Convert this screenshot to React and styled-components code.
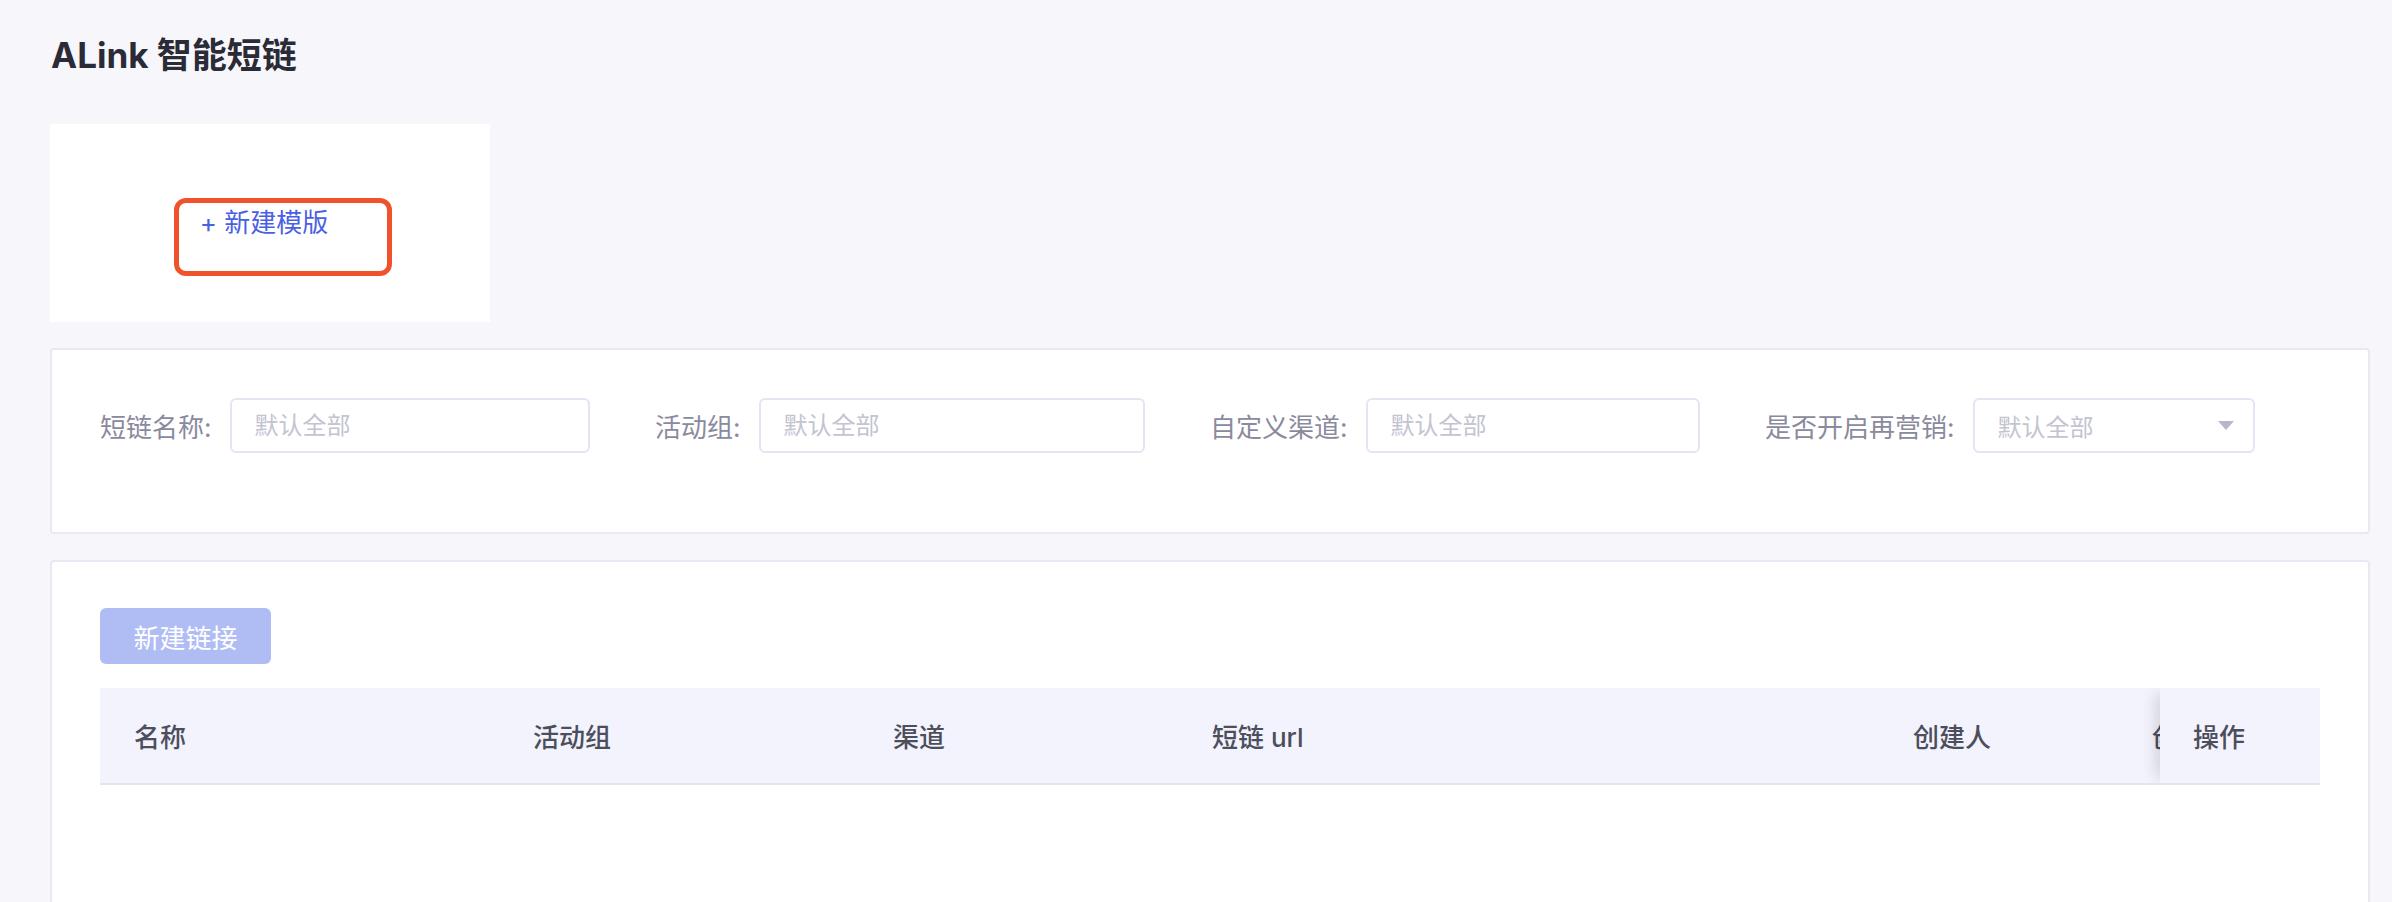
import styled, { createGlobalStyle } from "styled-components"

const GlobalStyle = createGlobalStyle`
  html, body {
    margin: 0;
    padding: 0;
    background: #f7f7fb;
  }
  body {
    font-family: Inter, "Noto Sans CJK SC", sans-serif;
  }
  *, *::before, *::after {
    box-sizing: border-box;
  }
`

const filters = [
  { label: "短链名称:", select: false },
  { label: "活动组:", select: false },
  { label: "自定义渠道:", select: false },
  { label: "是否开启再营销:", select: true },
]

const columns = [
  { title: "名称", width: 399 },
  { title: "活动组", width: 360 },
  { title: "渠道", width: 319 },
  { title: "短链 url", width: 701 },
  { title: "创建人", width: 239 },
  { title: "创建时间", width: 42 },
]

export default function App() {
  return (
    <Page>
      <GlobalStyle />
      <Title>ALink 智能短链</Title>

      <TemplateCard>
        <NewTemplate>+ 新建模版</NewTemplate>
      </TemplateCard>

      <FilterCard>
        <FilterRow>
          {filters.map((f) => (
            <Field key={f.label}>
              <Label>{f.label}</Label>
              {f.select ? (
                <Select>
                  <span>默认全部</span>
                  <Arrow />
                </Select>
              ) : (
                <Input placeholder="默认全部" />
              )}
            </Field>
          ))}
        </FilterRow>
      </FilterCard>

      <TableCard>
        <PrimaryButton>新建链接</PrimaryButton>
        <HeaderRow>
          {columns.map((c) => (
            <HeadCell key={c.title} $width={c.width}>
              {c.title}
            </HeadCell>
          ))}
          <FixedCell>操作</FixedCell>
        </HeaderRow>
      </TableCard>
    </Page>
  )
}

const Page = styled.div`
  padding: 34px 22px 0 50px;
  min-height: 902px;
  overflow: hidden;
`

const Title = styled.h1`
  margin: 0 0 0 1px;
  font-size: 35px;
  line-height: 42px;
  font-weight: 700;
  color: #2b2b38;
`

const TemplateCard = styled.div`
  margin-top: 48px;
  width: 440px;
  height: 198px;
  background: #fff;
  display: flex;
  align-items: center;
  justify-content: center;
  padding-right: 12px;
`

const NewTemplate = styled.div`
  position: relative;
  font-size: 26px;
  line-height: 36px;
  color: #4a60e4;
  cursor: pointer;

  &::after {
    content: "";
    position: absolute;
    top: -7px;
    left: -26px;
    width: 218px;
    height: 78px;
    border: 5px solid #f0532b;
    border-radius: 12px;
  }
`

const FilterCard = styled.div`
  margin-top: 26px;
  background: #fff;
  border: 2px solid #e8e9f3;
  border-radius: 4px;
  padding: 48px 48px 79px;
`

const FilterRow = styled.div`
  display: flex;
  gap: 65px;
`

const Field = styled.div`
  width: 490px;
  display: flex;
  align-items: center;
  gap: 18px;
`

const Label = styled.span`
  font-size: 26px;
  color: #8a8a9e;
  white-space: nowrap;
`

const Input = styled.input`
  flex: 1;
  min-width: 0;
  height: 55px;
  border: 2px solid #e4e5f3;
  border-radius: 6px;
  padding: 0 23px;
  font-family: inherit;
  font-size: 24px;
  color: #333;
  outline: none;
  background: #fff;

  &::placeholder {
    color: #c3c3d1;
  }
`

const Select = styled.div`
  flex: 1;
  height: 55px;
  border: 2px solid #e4e5f3;
  border-radius: 6px;
  padding: 0 19px 0 23px;
  display: flex;
  align-items: center;
  justify-content: space-between;
  font-size: 24px;
  color: #c3c3d1;
`

const Arrow = styled.span`
  width: 0;
  height: 0;
  border-left: 8px solid transparent;
  border-right: 8px solid transparent;
  border-top: 9px solid #b6b7c9;
`

const TableCard = styled.div`
  margin-top: 26px;
  min-height: 500px;
  background: #fff;
  border: 2px solid #e8e9f3;
  border-radius: 4px;
  padding: 46px 48px;
`

const PrimaryButton = styled.button`
  width: 171px;
  height: 56px;
  border: none;
  border-radius: 6px;
  background: #b0bdf4;
  color: #fff;
  font-family: inherit;
  font-size: 26px;
  cursor: not-allowed;
`

const HeaderRow = styled.div`
  position: relative;
  margin-top: 24px;
  height: 97px;
  display: flex;
  background: #f2f3fc;
  border-bottom: 2px solid #e3e4ee;
  overflow: hidden;
`

const HeadCell = styled.div`
  flex: 0 0 ${(p) => p.$width}px;
  display: flex;
  align-items: center;
  padding-left: 34px;
  font-size: 26px;
  font-weight: 500;
  color: #4d4e5c;
  white-space: nowrap;
  overflow: hidden;
`

const FixedCell = styled.div`
  position: absolute;
  top: 0;
  right: 0;
  bottom: 0;
  width: 160px;
  display: flex;
  align-items: center;
  padding-left: 33px;
  background: #f2f3fc;
  font-size: 26px;
  font-weight: 500;
  color: #4d4e5c;
  box-shadow: -10px 0 14px -6px rgba(0, 0, 0, 0.14);
`
